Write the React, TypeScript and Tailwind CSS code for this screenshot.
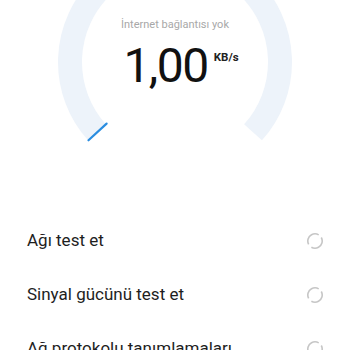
import React from "react";

function Spinner() {
  return (
    <svg width="18" height="18" viewBox="0 0 18 18">
      <circle
        cx="9"
        cy="9"
        r="7.2"
        fill="none"
        stroke="#c6c6c6"
        strokeWidth="1.6"
        strokeDasharray="18.6 4"
        transform="rotate(-29 9 9)"
      />
    </svg>
  );
}

function Gauge() {
  return (
    <svg
      className="absolute left-0 top-0"
      width="350"
      height="214"
      viewBox="0 0 350 214"
    >
      <path
        d="M 97 132.3 A 105 105 0 1 1 253 132.3"
        fill="none"
        stroke="#edf3fa"
        strokeWidth="24"
      />
      <line
        x1="88.5"
        y1="140.3"
        x2="106.6"
        y2="123.6"
        stroke="#2a8de0"
        strokeWidth="2.2"
        strokeLinecap="round"
      />
    </svg>
  );
}

const items = ["Ağı test et", "Sinyal gücünü test et", "Ağ protokolu tanımlamaları"];

export default function App() {
  return (
    <div
      className="w-[350px] h-[350px] overflow-hidden bg-white"
      style={{ fontFamily: "Roboto, 'Noto Sans', sans-serif" }}
    >
      <div className="relative h-[214px]">
        <Gauge />
        <div className="relative flex flex-col items-center pt-[17px]">
          <div className="text-[11px] leading-[16px] text-[#a8a8a8]">
            İnternet bağlantısı yok
          </div>
          <div className="mt-[9px] flex items-start pl-[12px]">
            <span className="text-[48px] leading-[48px] tracking-[-1.5px] text-[#111111]">1,00</span>
            <span className="ml-[6px] mt-[10px] text-[11.5px] leading-[11px] font-bold text-[#222222]">
              KB/s
            </span>
          </div>
        </div>
      </div>
      <div className="flex flex-col">
        {items.map((t) => (
          <div
            key={t}
            className="flex h-[54px] items-center justify-between pl-[27px] pr-[26px]"
          >
            <span className="text-[17px] text-[#1e1e1e]">{t}</span>
            <Spinner />
          </div>
        ))}
      </div>
    </div>
  );
}
